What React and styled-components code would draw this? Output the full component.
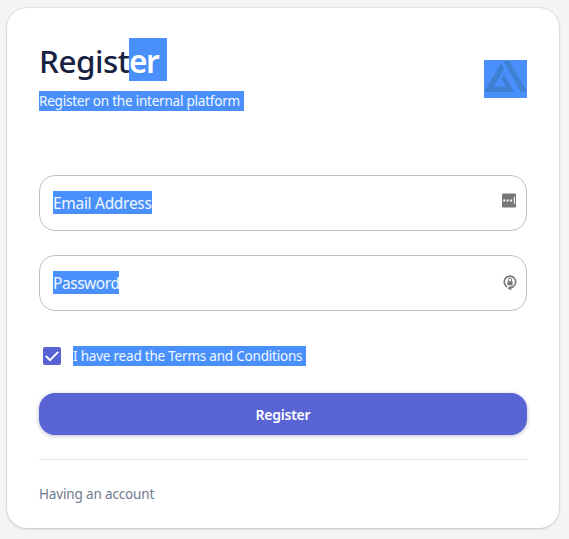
import React from "react";
import styled, { createGlobalStyle } from "styled-components";

const GlobalStyle = createGlobalStyle`
  * { box-sizing: border-box; }
  body { margin: 0; background: #f3f4f6; font-family: "Noto Sans", "Open Sans", sans-serif; }
`;

const Page = styled.main`
  width: 569px;
  height: 539px;
  padding: 8px 10px 11px 7px;
  background: #f3f4f6;
  overflow: hidden;
`;

const Card = styled.section`
  height: 520px;
  padding: 30px 32px 0;
  border-radius: 20px;
  background: #fff;
  box-shadow: 0 0 0 1px rgba(17, 24, 39, 0.06), 0 1px 3px rgba(17, 24, 39, 0.16);
`;

const Header = styled.header`
  display: flex;
  justify-content: space-between;
  height: 137px;
`;

const Title = styled.h1`
  display: flex;
  margin: 0 0 10px;
  height: 43px;
  font-size: 31.5px;
  line-height: 46px;
  font-weight: 500;
  letter-spacing: -0.5px;
  color: #172243;
  white-space: pre;
`;

const TitleStart = styled.span`
  width: 90px;
`;

const TitleSelected = styled.span`
  width: 38px;
  background: #4990fc;
  color: #fff;
  font-weight: 600;
  letter-spacing: -1.4px;
`;

const Selected = styled.span`
  display: block;
  width: ${(p) => p.$width}px;
  height: ${(p) => p.$height || 20}px;
  background: #4990fc;
  color: #f1f7ff;
  font-size: ${(p) => p.$size || 13.5}px;
  line-height: ${(p) => p.$line || p.$height || 20}px;
  letter-spacing: ${(p) => p.$spacing || 0}px;
  white-space: nowrap;
`;

const Logo = styled.svg`
  display: block;
  width: 43px;
  height: 38px;
  margin-top: 22px;
  background: #4990fc;
`;

const Field = styled.div`
  display: flex;
  justify-content: space-between;
  height: 56px;
  margin-bottom: 24px;
  padding: 15px 10px 0 13px;
  border: 1px solid #c1c1c5;
  border-radius: 16px;
`;

const FieldIcon = styled.svg`
  display: block;
  width: 14px;
  height: ${(p) => p.$height || 15}px;
  margin-top: ${(p) => p.$top}px;
  margin-right: ${(p) => p.$right || 0}px;
`;

const Agreement = styled.label`
  display: flex;
  align-items: center;
  height: 20px;
  margin: 35px 0 27px 4px;
  gap: 12px;
`;

const Checkbox = styled.svg`
  width: 18px;
  height: 18px;
`;

const Submit = styled.button`
  display: block;
  width: 100%;
  height: 42px;
  padding: 1px 0 0;
  border: 0;
  border-radius: 16px;
  background: #5964d4;
  box-shadow: 0 1px 4px rgba(40, 48, 110, 0.32);
  color: #fff;
  font: 600 14px "Noto Sans", sans-serif;
  letter-spacing: -0.25px;
`;

const Footer = styled.footer`
  margin-top: 24px;
  padding-top: 24px;
  border-top: 1px solid #dfe0e3;
  color: #707b8d;
  font-size: 13.5px;
  line-height: 20px;
  letter-spacing: -0.15px;
`;

export default function App() {
  return (
    <Page>
      <GlobalStyle />
      <Card>
        <Header>
          <div>
            <Title>
              <TitleStart>Regist</TitleStart>
              <TitleSelected>er</TitleSelected>
            </Title>
            <Selected $width={205} $spacing={-0.22}>Register on the internal platform</Selected>
          </div>
          <Logo viewBox="0 0 43 38" aria-label="Logo">
            <path fill="#3f80d2" d="M17 3 20.2 9 10 26.5h11.5l-4.2-7 2.8-4.8L30.5 32H0Z" />
            <path fill="#3f80d2" d="M19.5 1h6L43 32h-6.2Z" />
          </Logo>
        </Header>
        <Field>
          <Selected $width={99} $height={23} $line={25} $size={15.5} $spacing={-0.3}>Email Address</Selected>
          <FieldIcon viewBox="0 0 14 15" $top={2}>
            <rect y="0.5" width="14" height="14" rx="1.3" fill="#777" />
            <path fill="#fff" d="M1.3 6.4h2v2h-2zM4.7 6.4h2v2h-2zM8.1 6.4h2v2h-2zM11.8 3.8h1.1v7h-1.1z" />
          </FieldIcon>
        </Field>
        <Field>
          <Selected $width={66} $height={23} $line={25} $size={15.5} $spacing={-0.45}>Password</Selected>
          <FieldIcon viewBox="0 0 14 17" $height={17} $top={3} $right={-1}>
            <path d="M4.3 12.9A5.7 5.7 0 1 1 10 12.7L7.5 14" fill="none" stroke="#777" strokeWidth="1.6" />
            <path d="m8.2 11.5-.1 5-3.7-2.3Z" fill="#777" />
            <path d="M4.4 7.2h5.2v4H4.4z" fill="#777" />
            <path d="M5.5 7.4V5.7a1.5 1.5 0 0 1 3 0v1.7" fill="none" stroke="#777" />
          </FieldIcon>
        </Field>
        <Agreement>
          <Checkbox viewBox="0 0 18 18">
            <rect width="18" height="18" rx="2" fill="#5964d4" />
            <path d="m2.8 9 4.2 4.2 8.2-8.3" fill="none" stroke="#fff" strokeWidth="1.9" />
          </Checkbox>
          <Selected $width={233} $spacing={-0.21}>I have read the Terms and Conditions</Selected>
        </Agreement>
        <Submit>Register</Submit>
        <Footer>Having an account</Footer>
      </Card>
    </Page>
  );
}
